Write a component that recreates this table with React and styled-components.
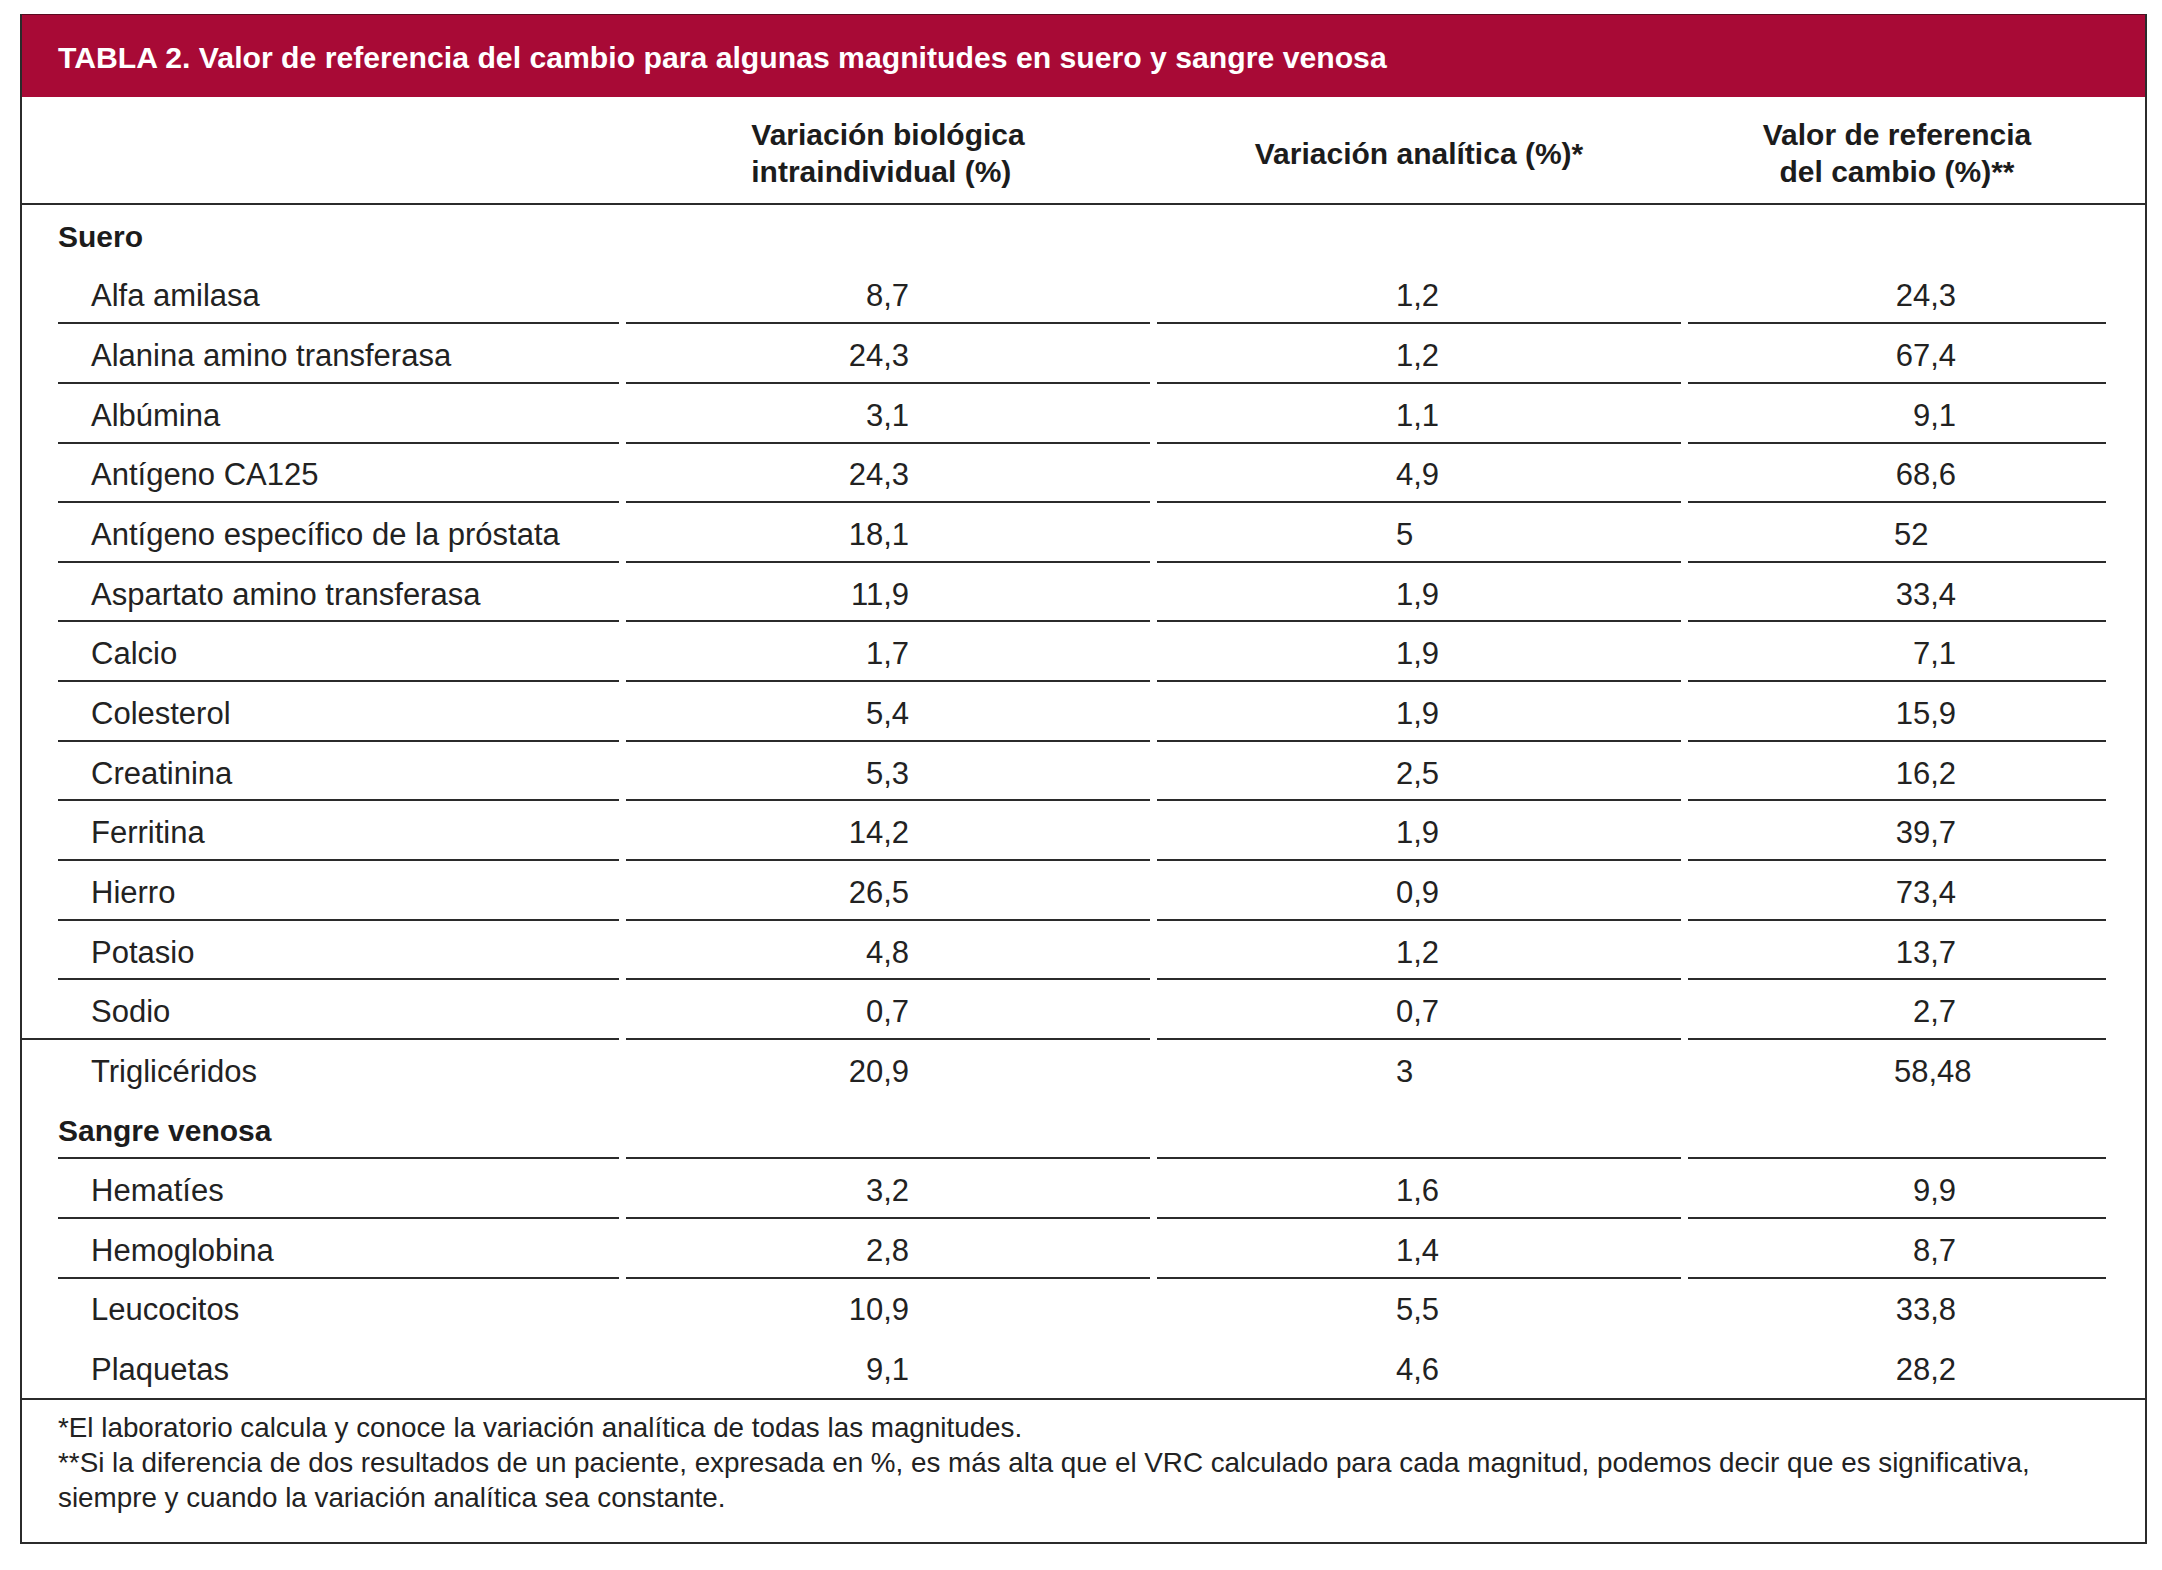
import React from 'react'
import styled, { createGlobalStyle } from 'styled-components'

const GlobalStyle = createGlobalStyle`
  body {
    margin: 0;
    background: #ffffff;
    font-family: "Liberation Sans", Arial, sans-serif;
    color: #222222;
  }
`

const COLS = '561px 524px 524px 418px'

const Page = styled.div`
  padding: 14px 0 0 20px;
`
const TableBox = styled.div`
  width: 2127px;
  box-sizing: border-box;
  border: 2px solid #2b2b2b;
  border-top: none;
`
const TitleBar = styled.div`
  height: 83px;
  background: #a80a36;
  border-top: 1px solid #5a0a20;
  box-sizing: border-box;
  display: flex;
  align-items: center;
  padding: 3px 0 0 36px;
  color: #ffffff;
  font-weight: 700;
  font-size: 30.2px;
  white-space: nowrap;
`
const HeaderRow = styled.div`
  height: 108px;
  box-sizing: border-box;
  border-bottom: 2px solid #2b2b2b;
  display: grid;
  grid-template-columns: ${COLS};
  column-gap: 7px;
  padding: 0 37px 0 36px;
`
const HeadCell = styled.div`
  display: flex;
  align-items: center;
  justify-content: center;
  padding-top: 6px;
  text-align: ${p => (p.$left ? 'left' : 'center')};
  font-weight: 700;
  font-size: 30px;
  line-height: 37px;
  color: #1c1c1c;
`
const Body = styled.div`
  padding: 0 37px 0 36px;
`
const Row = styled.div`
  display: grid;
  grid-template-columns: ${COLS};
  column-gap: 7px;
  height: 59.65px;
`
const Cell = styled.div`
  box-sizing: border-box;
  display: flex;
  align-items: center;
  padding-top: 6px;
  font-size: 31px;
  white-space: nowrap;
  border-bottom: ${p => (p.$line ? '2px solid #2b2b2b' : '2px solid transparent')};
`
const GroupCell = styled(Cell)`
  font-weight: 700;
  font-size: 30px;
  color: #1c1c1c;
`
const NameCell = styled(Cell)`
  padding-left: ${p => (p.$extend ? '69px' : '33px')};
  margin-left: ${p => (p.$extend ? '-36px' : '0')};
`
const RightNum = styled(Cell)`
  justify-content: flex-end;
  padding-right: ${p => p.$pad}px;
`
const LeftNum = styled(Cell)`
  padding-left: ${p => p.$pad}px;
`
const Footer = styled.div`
  border-top: 2px solid #2b2b2b;
  height: 144px;
  box-sizing: border-box;
  padding: 10px 0 0 36px;
  font-size: 27.8px;
  line-height: 35px;
  white-space: nowrap;
`
const Note = styled.div``

const suero = [
  ['Alfa amilasa', '8,7', '1,2', '24,3'],
  ['Alanina amino transferasa', '24,3', '1,2', '67,4'],
  ['Albúmina', '3,1', '1,1', '9,1'],
  ['Antígeno CA125', '24,3', '4,9', '68,6'],
  ['Antígeno específico de la próstata', '18,1', '5', '52', true],
  ['Aspartato amino transferasa', '11,9', '1,9', '33,4'],
  ['Calcio', '1,7', '1,9', '7,1'],
  ['Colesterol', '5,4', '1,9', '15,9'],
  ['Creatinina', '5,3', '2,5', '16,2'],
  ['Ferritina', '14,2', '1,9', '39,7'],
  ['Hierro', '26,5', '0,9', '73,4'],
  ['Potasio', '4,8', '1,2', '13,7'],
  ['Sodio', '0,7', '0,7', '2,7'],
  ['Triglicéridos', '20,9', '3', '58,48', true],
]

const sangre = [
  ['Hematíes', '3,2', '1,6', '9,9'],
  ['Hemoglobina', '2,8', '1,4', '8,7'],
  ['Leucocitos', '10,9', '5,5', '33,8'],
  ['Plaquetas', '9,1', '4,6', '28,2'],
]

/* -------------------------------------------------------------------------- */
const DataRow = ({ item, line, extend }) => {
  const [name, bio, ana, vrc, vrcLeft] = item
  return (
    <Row>
      <NameCell $line={line} $extend={extend}>{name}</NameCell>
      <RightNum $line={line} $pad={241}>{bio}</RightNum>
      <LeftNum $line={line} $pad={239}>{ana}</LeftNum>
      {vrcLeft ? (
        <LeftNum $line={line} $pad={206}>{vrc}</LeftNum>
      ) : (
        <RightNum $line={line} $pad={150}>{vrc}</RightNum>
      )}
    </Row>
  )
}

const GroupRow = ({ label, line }) => (
  <Row>
    <GroupCell $line={line}>{label}</GroupCell>
    <Cell $line={line} />
    <Cell $line={line} />
    <Cell $line={line} />
  </Row>
)

export default function App() {
  return (
    <Page>
      <GlobalStyle />
      <TableBox>
        <TitleBar>
          TABLA 2. Valor de referencia del cambio para algunas magnitudes en suero y sangre venosa
        </TitleBar>

        <HeaderRow>
          <div />
          <HeadCell $left>
            Variación biológica<br />intraindividual (%)
          </HeadCell>
          <HeadCell>Variación analítica (%)*</HeadCell>
          <HeadCell>
            Valor de referencia<br />del cambio (%)**
          </HeadCell>
        </HeaderRow>

        <Body>
          <GroupRow label="Suero" />
          {suero.map((item, i) => (
            <DataRow
              key={item[0]}
              item={item}
              line={i < suero.length - 1}
              extend={item[0] === 'Sodio'}
            />
          ))}
          <GroupRow label="Sangre venosa" line />
          {sangre.map((item, i) => (
            <DataRow key={item[0]} item={item} line={i < 2} />
          ))}
        </Body>

        <Footer>
          <Note>*El laboratorio calcula y conoce la variación analítica de todas las magnitudes.</Note>
          <Note>
            **Si la diferencia de dos resultados de un paciente, expresada en %, es más alta que el VRC calculado para cada magnitud, podemos decir que es significativa,
          </Note>
          <Note>siempre y cuando la variación analítica sea constante.</Note>
        </Footer>
      </TableBox>
    </Page>
  )
}
